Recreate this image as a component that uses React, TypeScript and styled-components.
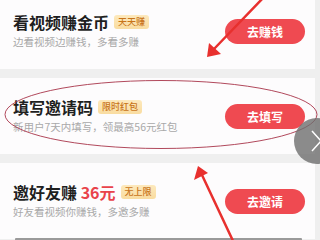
import React from "react";
import styled, { createGlobalStyle } from "styled-components";

const Global = createGlobalStyle`
  html, body { margin: 0; padding: 0; background: #efefef; overflow: hidden; }
  body { width: 320px; height: 240px; font-family: "Noto Sans CJK SC", "Noto Sans", sans-serif; }
`;

const Page = styled.div`
  position: relative;
  width: 320px;
  height: 240px;
  overflow: hidden;
  background: #efefef;
`;

const List = styled.div`
  display: flex;
  flex-direction: column;
  gap: 9px;
  margin-top: -7px;
  margin-right: 5px;
`;

const Card = styled.div`
  height: 76px;
  background: #fdfcfd;
  display: flex;
  align-items: center;
  justify-content: space-between;
  padding: 0 10px 0 13px;
  box-sizing: border-box;
`;

const Info = styled.div`
  display: flex;
  flex-direction: column;
  gap: 3px;
  margin-top: -1px;
`;

const TitleRow = styled.div`
  display: flex;
  align-items: center;
  gap: 5px;
  height: 20px;
`;

const Title = styled.span`
  font-size: 16px;
  font-weight: 700;
  color: #1f1f1f;
  line-height: 20px;
`;

const Amount = styled.span`
  color: #e9434b;
`;

const Badge = styled.span`
  font-size: 9px;
  line-height: 14px;
  height: 14px;
  padding: 0 4px;
  border-radius: 3px;
  background: linear-gradient(180deg, #fde9bd, #f9dca0);
  color: #c8741a;
  font-weight: 500;
`;

const Sub = styled.span`
  font-size: 10.5px;
  color: #a9a9a9;
  line-height: 14px;
  white-space: nowrap;
`;

const Button = styled.button`
  width: 80px;
  height: 25px;
  border: none;
  border-radius: 13px;
  background: #ef4a51;
  color: #fff;
  font-family: inherit;
  font-size: 12px;
  font-weight: 700;
  padding: 0;
  flex-shrink: 0;
`;

const BottomEdge = styled.div`
  position: absolute;
  left: 15px;
  right: 18px;
  bottom: 0;
  height: 2px;
  background: #9a9a9a;
  border-radius: 1px 1px 0 0;
`;

const Overlay = styled.svg`
  position: absolute;
  left: 0;
  top: 0;
  width: 320px;
  height: 240px;
  pointer-events: none;
`;

const items = [
  { title: "看视频赚金币", amount: "", badge: "天天赚", sub: "边看视频边赚钱，多看多赚", btn: "去赚钱" },
  { title: "填写邀请码", amount: "", badge: "限时红包", sub: "新用户7天内填写，领最高56元红包", btn: "去填写" },
  { title: "邀好友赚", amount: "36元", badge: "无上限", sub: "好友看视频你赚钱，多邀多赚", btn: "去邀请" },
];

export default function App() {
  return (
    <Page>
      <Global />
      <List>
        {items.map((it) => (
          <Card key={it.btn}>
            <Info>
              <TitleRow>
                <Title>
                  {it.title}
                  {it.amount && <Amount> {it.amount}</Amount>}
                </Title>
                <Badge>{it.badge}</Badge>
              </TitleRow>
              <Sub>{it.sub}</Sub>
            </Info>
            <Button>{it.btn}</Button>
          </Card>
        ))}
      </List>
      <BottomEdge />
      <Overlay viewBox="0 0 320 240">
        <ellipse cx="161" cy="114.5" rx="156" ry="34" fill="none" stroke="#a8344a" strokeWidth="0.9" />
        <circle cx="317" cy="141" r="23" fill="rgba(110,110,110,0.8)" />
        <polyline points="312,131 321,141 312,151" fill="none" stroke="#fff" strokeWidth="1.5" />
        <line x1="264" y1="-3" x2="214" y2="49" stroke="#e8302e" strokeWidth="2.5" strokeLinecap="round" />
        <polygon points="207,57 209,43 221,54" fill="#e8302e" />
        <line x1="234" y1="243" x2="202" y2="175" stroke="#e8302e" strokeWidth="2.5" strokeLinecap="round" />
        <polygon points="198,166 194,180 208,173" fill="#e8302e" />
      </Overlay>
    </Page>
  );
}
